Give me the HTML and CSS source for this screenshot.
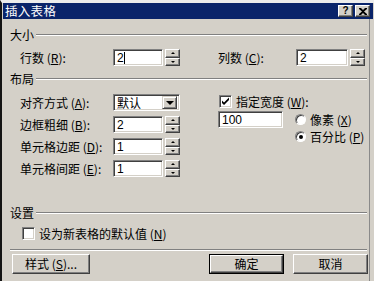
FILE: index.html
```html
<!DOCTYPE html>
<html>
<head>
<meta charset="utf-8">
<link rel="stylesheet" href="styles.css">
</head>
<body>
<div class="window">
  <div class="titlebar">
    <span class="title">插入表格</span>
    <div class="tbtns">
      <span class="tbtn help">?</span>
      <span class="tbtn close"><svg width="8" height="7" viewBox="0 0 8 7"><path d="M0 0h2l2 2 2-2h2v1L5 3.5 8 6v1H6L4 5 2 7H0V6l3-2.5L0 1z" fill="#000"/></svg></span>
    </div>
  </div>
  <div class="content">
    <div class="group-title"><span>大小</span><i class="etch"></i></div>
    <div class="size-row">
      <span class="label lbl-rows">行数 (<u>R</u>):</span>
      <div class="field f50"><span>2</span><i class="caret"></i></div>
      <div class="spin"><span class="sp up"><i class="tri-up"></i></span><span class="sp down"><i class="tri-down"></i></span></div>
      <span class="label lbl-cols">列数 (<u>C</u>):</span>
      <div class="field f52"><span>2</span></div>
      <div class="spin"><span class="sp up"><i class="tri-up"></i></span><span class="sp down"><i class="tri-down"></i></span></div>
    </div>

    <div class="group-title g2"><span>布局</span><i class="etch"></i></div>
    <div class="layout">
      <div class="left">
        <div class="lrow">
          <span class="label lw">对齐方式 (<u>A</u>):</span>
          <div class="select"><span class="sel-text">默认</span><span class="sel-btn"><i class="tri-big"></i></span></div>
        </div>
        <div class="lrow">
          <span class="label lw">边框粗细 (<u>B</u>):</span>
          <div class="field f50"><span>2</span></div>
          <div class="spin"><span class="sp up"><i class="tri-up"></i></span><span class="sp down"><i class="tri-down"></i></span></div>
        </div>
        <div class="lrow">
          <span class="label lw">单元格边距 (<u>D</u>):</span>
          <div class="field f50"><span>1</span></div>
          <div class="spin"><span class="sp up"><i class="tri-up"></i></span><span class="sp down"><i class="tri-down"></i></span></div>
        </div>
        <div class="lrow">
          <span class="label lw">单元格间距 (<u>E</u>):</span>
          <div class="field f50"><span>1</span></div>
          <div class="spin"><span class="sp up"><i class="tri-up"></i></span><span class="sp down"><i class="tri-down"></i></span></div>
        </div>
      </div>
      <div class="right">
        <div class="chk-row">
          <span class="checkbox"><svg width="9" height="9" viewBox="0 0 9 9"><path d="M1 3.5l2 2L8 0.5v2.5L3 8 1 6z" fill="#000"/></svg></span>
          <span>指定宽度 (<u>W</u>):</span>
        </div>
        <div class="width-row">
          <div class="field f65"><span>100</span></div>
          <div class="radios">
            <div class="radio-row"><span class="radio"></span><span>像素 (<u>X</u>)</span></div>
            <div class="radio-row"><span class="radio on"></span><span>百分比 (<u>P</u>)</span></div>
          </div>
        </div>
      </div>
    </div>

    <div class="group-title g3"><span>设置</span><i class="etch"></i></div>
    <div class="chk-row def-row">
      <span class="checkbox"></span>
      <span>设为新表格的默认值 (<u>N</u>)</span>
    </div>
    <div class="sep"></div>
    <div class="buttons">
      <span class="btn btn-style">样式 (<u>S</u>)...</span>
      <span class="spacer"></span>
      <span class="btn default"><span class="btn-in">确定</span></span>
      <span class="btn btn-cancel">取消</span>
    </div>
  </div>
</div>
</body>
</html>
```

FILE: styles.css
```css
* { box-sizing: border-box; }
html, body { margin: 0; padding: 0; }
body {
  width: 374px;
  height: 281px;
  overflow: hidden;
  background: #d4d0c8;
  font-family: "Noto Sans CJK SC", "Noto Sans", sans-serif;
  font-size: 12px;
  color: #000;
}
u { text-decoration: underline; text-underline-offset: 1px; }

.window {
  height: 281px;
  border-top: 3px solid #ececec;
  border-left: 2px solid #141414;
  padding-left: 1px;
  padding-right: 1px;
}

.titlebar {
  height: 16px;
  background: #0a246a;
  display: flex;
  align-items: center;
  justify-content: space-between;
  padding: 0 3px 0 2px;
}
.title { color: #fff; font-size: 12.5px; line-height: 16px; letter-spacing: 0.3px; }
.tbtns { display: flex; gap: 2px; }
.tbtn {
  width: 15px;
  height: 12px;
  background: #d4d0c8;
  border: 1px solid;
  border-color: #fff #404040 #404040 #fff;
  box-shadow: inset -1px -1px #808080;
  display: flex;
  align-items: center;
  justify-content: center;
  font-family: "Liberation Sans", sans-serif;
  font-weight: bold;
  font-size: 10px;
  line-height: 10px;
}

.content {
  margin-right: 3px;
  border-right: 1px solid #8a8a8a;
  height: 262px;
  padding: 9px 2px 0 7px;
}

.group-title {
  display: flex;
  align-items: center;
  height: 14px;
  line-height: 14px;
}
.group-title span { margin-right: 2px; }
.etch {
  flex: 1;
  height: 2px;
  border-top: 1px solid #808080;
  border-bottom: 1px solid #fff;
}
.g2 { margin-top: 6px; }
.g3 { margin-top: 29px; }

.label { line-height: 14px; white-space: nowrap; }

.size-row {
  display: flex;
  align-items: center;
  height: 17px;
  margin-top: 7px;
  padding-left: 10px;
}
.lbl-rows { width: 93px; }
.lbl-cols { width: 78px; margin-left: 38px; }

.field {
  height: 17px;
  background: #fff;
  border: 1px solid;
  border-color: #808080 #fff #fff #808080;
  box-shadow: inset 1px 1px #404040, inset -1px -1px #d4d0c8;
  padding-left: 3px;
  display: flex;
  align-items: center;
  font-size: 12px;
  line-height: 14px;
  font-family: "Liberation Sans", sans-serif;
}
.f50 { width: 50px; }
.f52 { width: 52px; }
.f65 { width: 65px; }
.caret { width: 1px; height: 12px; background: #000; margin-left: 0px; }

.spin {
  width: 15px;
  height: 17px;
  margin-left: 2px;
  display: flex;
  flex-direction: column;
}
.sp {
  flex: 1;
  background: #d4d0c8;
  border: 1px solid;
  border-color: #fff #404040 #404040 #fff;
  box-shadow: inset -1px -1px #808080;
  display: flex;
  align-items: center;
  justify-content: center;
}
.tri-up {
  width: 0; height: 0;
  border-left: 2px solid transparent;
  border-right: 2px solid transparent;
  border-bottom: 2px solid #000;
}
.tri-down {
  width: 0; height: 0;
  border-left: 2px solid transparent;
  border-right: 2px solid transparent;
  border-top: 2px solid #000;
}

.layout {
  display: flex;
  margin-top: 8px;
}
.left {
  width: 208px;
  padding-left: 10px;
  display: flex;
  flex-direction: column;
  gap: 5px;
}
.lrow { display: flex; align-items: center; height: 17px; }
.lw { width: 93px; }

.select {
  width: 67px;
  height: 17px;
  background: #fff;
  border: 1px solid;
  border-color: #808080 #fff #fff #808080;
  box-shadow: inset 1px 1px #404040, inset -1px -1px #d4d0c8;
  display: flex;
  align-items: center;
  padding: 2px 2px 2px 3px;
}
.sel-text { flex: 1; line-height: 13px; }
.sel-btn {
  width: 15px;
  height: 13px;
  background: #d4d0c8;
  border: 1px solid;
  border-color: #d4d0c8 #404040 #404040 #d4d0c8;
  box-shadow: inset 1px 1px #fff, inset -1px -1px #808080;
  display: flex;
  align-items: center;
  justify-content: center;
}
.tri-big {
  width: 0; height: 0;
  border-left: 4px solid transparent;
  border-right: 4px solid transparent;
  border-top: 4px solid #000;
}

.right { padding-left: 0; }
.chk-row {
  display: flex;
  align-items: center;
  height: 14px;
  gap: 4px;
  padding-left: 1px;
}
.checkbox {
  width: 13px;
  height: 13px;
  background: #fff;
  border: 1px solid;
  border-color: #808080 #fff #fff #808080;
  box-shadow: inset 1px 1px #404040, inset -1px -1px #d4d0c8;
  display: flex;
  align-items: center;
  justify-content: center;
}
.width-row {
  display: flex;
  margin-top: 3px;
}
.radios {
  margin-left: 12px;
  display: flex;
  flex-direction: column;
}
.radio-row {
  display: flex;
  align-items: center;
  height: 17px;
  gap: 4px;
}
.radio {
  width: 11px;
  height: 11px;
  border-radius: 50%;
  background: #fff;
  border: 1px solid;
  border-color: #808080 #fff #fff #808080;
  box-shadow: inset 1px 1px #404040;
  display: flex;
  align-items: center;
  justify-content: center;
}
.radio.on::after {
  content: "";
  width: 4px;
  height: 4px;
  border-radius: 50%;
  background: #000;
}

.def-row { margin-top: 6px; padding-left: 12px; }

.sep {
  margin-top: 9px;
  height: 2px;
  border-top: 1px solid #808080;
  border-bottom: 1px solid #fff;
}

.buttons {
  display: flex;
  margin-top: 3px;
  padding-left: 2px;
  margin-right: -1px;
  gap: 9px;
}
.spacer { flex: 1; }
.btn {
  height: 20px;
  width: 75px;
  background: #d4d0c8;
  border: 1px solid;
  border-color: #fff #404040 #404040 #fff;
  box-shadow: inset -1px -1px #808080;
  display: flex;
  align-items: center;
  justify-content: center;
  line-height: 14px;
}
.btn-style { width: 78px; }
.btn.default {
  border: 1px solid #000;
  box-shadow: none;
  padding: 0;
}
.btn-in {
  width: 100%;
  height: 100%;
  border: 1px solid;
  border-color: #fff #404040 #404040 #fff;
  box-shadow: inset -1px -1px #808080;
  display: flex;
  align-items: center;
  justify-content: center;
}
```
